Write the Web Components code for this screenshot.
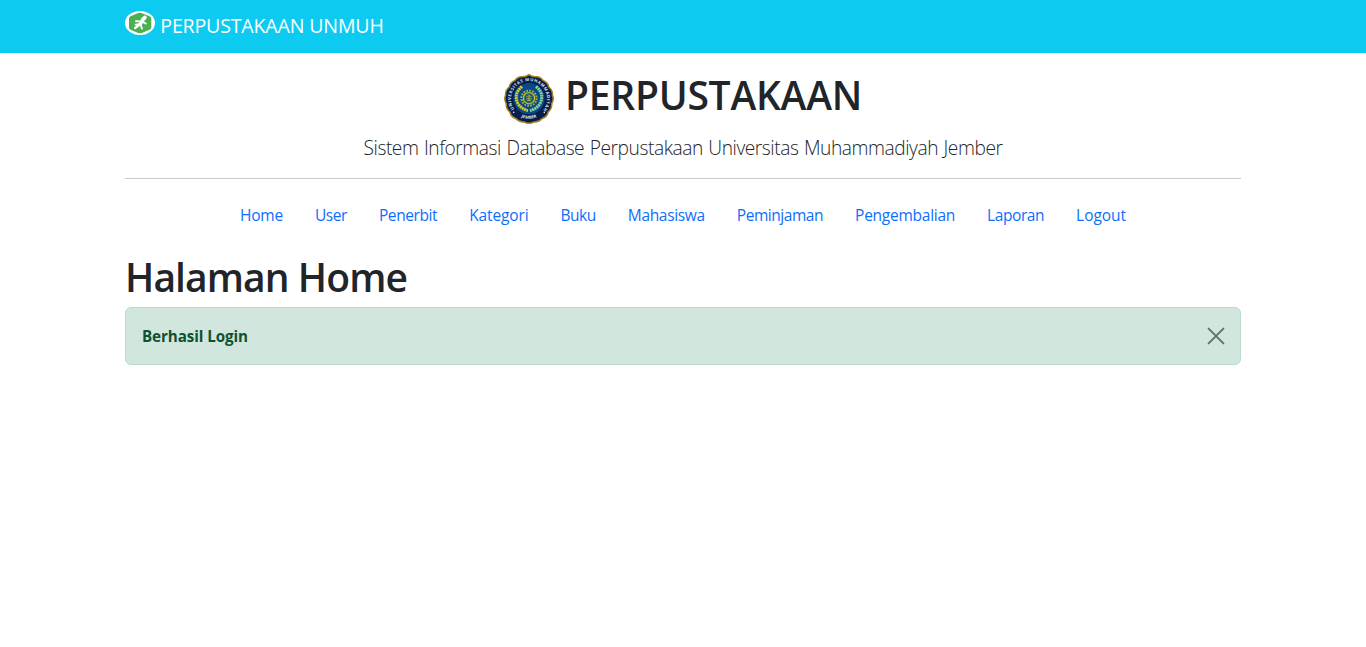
<!DOCTYPE html>
<html lang="id">
<head>
<meta charset="utf-8">
<title>Perpustakaan</title>
<style>
body{margin:0;background:#fff;color:#212529;font-family:"Open Sans","Noto Sans",sans-serif}
</style>
</head>
<body>
<library-page></library-page>
<script>
const define=(name,html,ready)=>customElements.define(name,class extends HTMLElement{
  constructor(){super();this.attachShadow({mode:'open'}).innerHTML=html}
  connectedCallback(){if(ready)ready(this)}
});

// Inline text whose tracking is adjusted to fill the requested width.
define('fit-text','<style>:host{display:inline-block;white-space:nowrap}span{display:inline-block}</style><span><slot></slot></span>',el=>{
  const w=+el.getAttribute('w'),s=el.shadowRoot.querySelector('span');
  const gap=(w-s.getBoundingClientRect().width)/el.textContent.length;
  s.style.letterSpacing=gap+'px';
  el.style.width=w+'px';
});

define('brand-logo',`<style>:host{display:block;width:30px;height:24px}svg{display:block}</style>
<svg width="30" height="24" viewBox="0 0 30 24"><ellipse cx="15" cy="12" rx="15" ry="12" fill="#fff"/>
<path d="M15 1.7Q16 1.7 17 2.2L24.5 5.3Q26.3 6.1 26.3 7.6V16.2Q26.3 17.9 24.5 18.7L16.8 22Q15 22.7 13.2 22L5.5 18.7Q4 18 4 16.2V7.6Q4 6.1 5.7 5.3L13.2 2.1Z" fill="#4caf50"/>
<g fill="none" stroke="#fff" stroke-linecap="round" stroke-linejoin="round"><path d="M19.8 6.6Q17.6 8 16.8 10.6" stroke-width="4"/><path d="M16.4 11Q14 14.5 10.2 17" stroke-width="2.6"/><path d="M16 11.3Q13.5 9.8 11 10.2M16.6 11.5Q19 10.8 20.8 12.6M16 12.2Q15.8 15.6 17 17.6M14.4 13.1L10.6 13.6" stroke-width="1.9"/></g></svg>`);

define('campus-emblem',`<style>:host{display:block;width:50px;height:50px}svg{display:block;overflow:visible}text{font:700 4.2px "Open Sans",sans-serif;fill:#dfe5f2}</style>
<svg width="50" height="50" viewBox="0 0 50 50">
<defs><path id="up" d="M10.2 35.2A18 18 0 1 1 39.8 35.2"/><path id="low" d="M10 38.6A21.5 21.5 0 0 0 40 38.6"/></defs>
<path d="M25 .7Q28.5 3.1 32.5 2.7Q36.5 2.8 39 6.4Q43.8 8.4 44.8 13Q48.9 16.3 48.4 21Q50.3 25.5 47.8 29.5Q48 34.8 44.2 38Q43 43.1 38.2 44.5Q34.8 48.3 30 47.9Q25 50.8 20 47.9Q15.2 48.3 11.8 44.5Q7 43.1 5.8 38Q2 34.8 2.2 29.5Q-.3 25.5 1.6 21Q1.1 16.3 5.2 13Q6.2 8.4 11 6.4Q13.5 2.8 17.5 2.7Q21.5 3.1 25 .7Z" fill="#071e4d" stroke="#a78024" stroke-width="1.5"/>
<circle cx="25" cy="24.6" r="15.6" fill="#064b83"/>
<text><textPath href="#up" textLength="79">UNIVERSITAS MUHAMMADIYAH</textPath></text>
<text><textPath href="#low" startOffset="50%" text-anchor="middle">JEMBER</textPath></text>
<g fill="none" stroke-width="3" stroke-dasharray="2 .5"><path d="M18 12.5Q9 20 14 29.5Q17.5 35.2 24 36.5" stroke="#d9cb3b"/><path d="M32 12.5Q41 20 36 29.5Q32.5 35.2 26 36.5" stroke="#8fce9d"/></g>
<circle cx="25" cy="24.2" r="7.6" fill="none" stroke="#a9a844" stroke-width="2" stroke-dasharray="1.8 1.18"/>
<circle cx="25" cy="24.2" r="5.6" fill="#12606f" stroke="#c8bb39" stroke-width="1.3"/>
<path d="M22.4 22.6Q25 21 27.6 22.6M22.2 24.8H27.8M23 26.8Q25 25.5 27 26.8M25 21.2V27.4" fill="none" stroke="#bdb944" stroke-width=".8"/>
<g fill="#d9dfec"><circle cx="9.7" cy="38.4" r=".8"/><circle cx="40.3" cy="38.4" r=".8"/></g></svg>`);

define('top-bar',`<style>:host{display:block;height:53px;background:#0dcaf0;color:#fff}
div{width:1116px;margin:auto;display:flex;gap:5.3px;align-items:flex-start;padding-top:11px}
fit-text{font-size:19.6px;line-height:30px}</style>
<div><brand-logo></brand-logo><fit-text w="223.4">PERPUSTAKAAN UNMUH</fit-text></div>`);

define('site-header',`<style>:host{display:block;height:125px;border-bottom:1px solid #c8c9ca}
.title{display:flex;justify-content:center;gap:11px;padding-top:18px;height:57px}
campus-emblem{margin-top:3px}
.title fit-text{font-size:39px;line-height:48px;font-weight:570}
.sub{text-align:center;font-weight:300;font-size:19.2px;line-height:30px;padding-top:5px;word-spacing:1px}</style>
<div class="title"><campus-emblem></campus-emblem><fit-text w="297">PERPUSTAKAAN</fit-text></div>
<div class="sub"><fit-text w="639">Sistem Informasi Database Perpustakaan Universitas Muhammadiyah Jember</fit-text></div>`);

define('nav-item',`<style>:host{display:block;padding:0 16px}a{display:block;color:#0d6efd;font-size:15.5px;line-height:24px;text-decoration:none}</style><a href="#"><slot></slot></a>`);

define('main-nav',`<style>:host{display:flex;justify-content:center;padding-top:24px;height:48px}</style>`
+[['Home',43],['User',32],['Penerbit',58.3],['Kategori',59.3],['Buku',35.3],['Mahasiswa',77],['Peminjaman',86.3],['Pengembalian',100],['Laporan',57],['Logout',50]].map(([t,w])=>`<nav-item><fit-text w="${w}">${t}</fit-text></nav-item>`).join(''));

define('page-heading',`<style>:host{display:block;height:54px;padding-top:2px}h1{margin:0;font-size:39px;line-height:48px;font-weight:570}</style><h1><slot></slot></h1>`);

define('alert-box',`<style>:host{display:flex;box-sizing:border-box;height:58px;align-items:center;justify-content:space-between;padding:0 16px;border:1px solid #badbcc;border-radius:6px;background:#d1e7dd;color:#0f5132;font-size:15.2px;font-weight:700;line-height:24px}
button{width:16px;height:16px;padding:0;border:0;background:none;opacity:.5}svg{display:block;overflow:visible}</style>
<slot></slot><button aria-label="Close"><svg width="16" height="16" viewBox="0 0 16 16"><path d="M.6.6L15.4 15.4M15.4.6L.6 15.4" stroke="#000" stroke-width="2" stroke-linecap="round"/></svg></button>`);

define('library-page',`<style>:host{display:block;height:647px;overflow:hidden}main{width:1116px;margin:auto}</style>
<top-bar></top-bar><main><site-header></site-header><main-nav></main-nav>
<page-heading><fit-text w="282">Halaman Home</fit-text></page-heading>
<alert-box><fit-text w="106">Berhasil Login</fit-text></alert-box></main>`);
</script>
</body>
</html>
